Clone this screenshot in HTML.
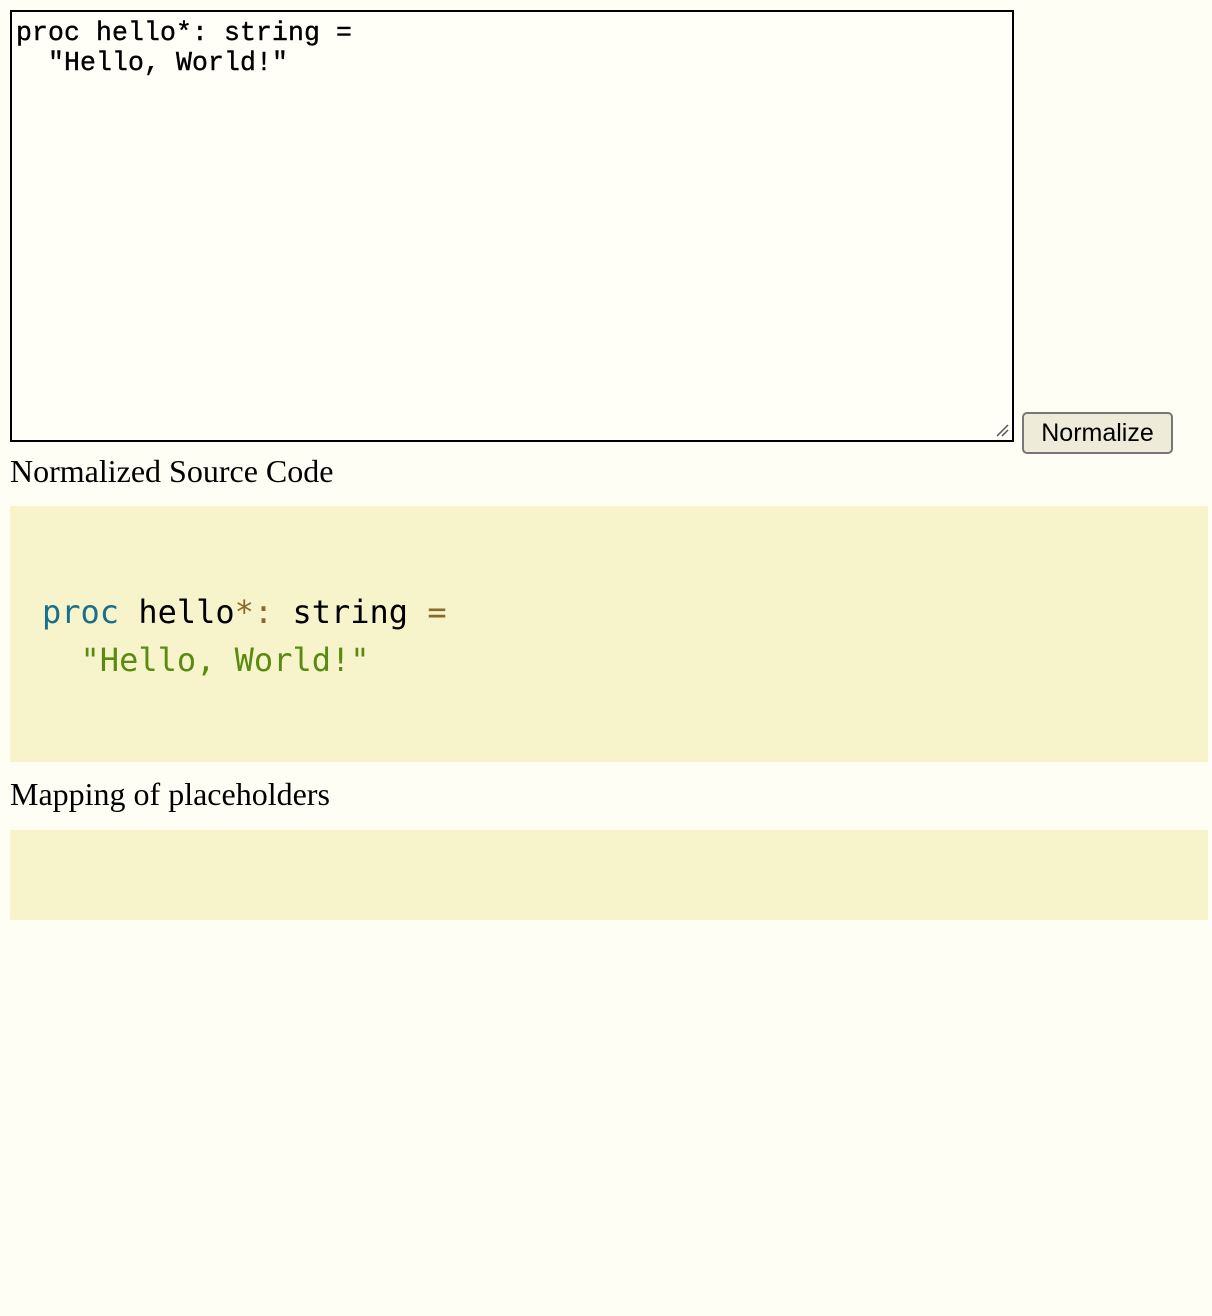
<!DOCTYPE html>
<html><head><style>
body{margin:0;background:#fffef4;width:1212px;height:1316px;position:relative;font-family:"Liberation Serif",serif;}
.ta{position:absolute;left:10px;top:10px;width:1000px;height:428px;border:2px solid #000;background:#fffff8;box-sizing:content-box;}
.ta pre{margin:0;position:absolute;left:4px;top:6px;font-family:"Liberation Mono",monospace;font-size:26.5px;line-height:30px;color:#000;letter-spacing:0.1px;-webkit-text-stroke:0.4px #000;}
.btn{position:absolute;left:1022px;top:412px;width:151px;height:42px;border:2px solid #777;border-radius:5px;background:#eeecd8;box-sizing:border-box;font-family:"Liberation Sans",sans-serif;font-size:25px;line-height:38px;text-align:center;color:#000;}
.h{position:absolute;left:10px;font-size:32px;color:#000;}
.box{position:absolute;left:10px;width:1198px;background:#f7f4cc;}
.code{position:absolute;left:42px;top:588px;margin:0;font-family:"DejaVu Sans Mono",monospace;font-size:32px;line-height:48px;color:#000;}
.k{color:#1a6f8c}.o{color:#8a6a2a}.s{color:#5a8a10}
</style></head><body>
<div class="ta"><pre>proc hello*: string =
  "Hello, World!"</pre>
<svg style="position:absolute;right:2px;bottom:2px" width="16" height="16"><path d="M3 14L14 3M8 14L14 8" stroke="#555" stroke-width="1.5"/></svg></div>
<div class="btn">Normalize</div>
<div class="h" style="top:453px">Normalized Source Code</div>
<div class="box" style="top:506px;height:256px"></div>
<pre class="code"><span class="k">proc</span> hello<span class="o">*:</span> string <span class="o">=</span>
  <span class="s">"Hello, World!"</span></pre>
<div class="h" style="top:776px">Mapping of placeholders</div>
<div class="box" style="top:830px;height:90px"></div>
</body></html>
